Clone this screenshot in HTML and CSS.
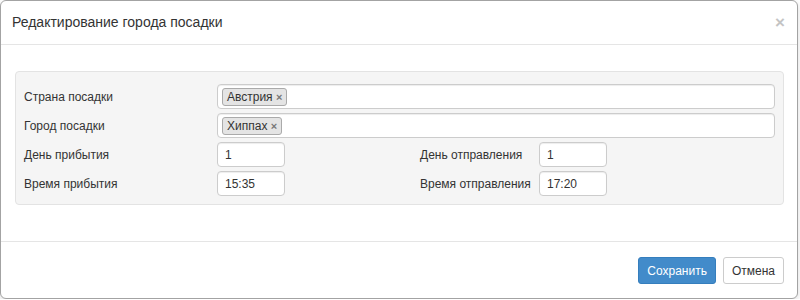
FILE: index.html
```
<!DOCTYPE html>
<html lang="ru">
<head>
	<meta charset="UTF-8">
	<title>Редактирование города посадки</title>
	<link rel="stylesheet" href="styles.css">
</head>
<body>
<div class="modal">
	<div class="modal-header">
		<span class="close">&times;</span>
		<h4 class="modal-title">Редактирование города посадки</h4>
	</div>
	<div class="modal-body">
		<div class="well">
			<div class="row">
				<label class="lbl">Страна посадки</label>
				<div class="tags"><span class="tag">Австрия <b>&times;</b></span></div>
			</div>
			<div class="row">
				<label class="lbl">Город посадки</label>
				<div class="tags"><span class="tag">Хиппах <b>&times;</b></span></div>
			</div>
			<div class="row">
				<label class="lbl">День прибытия</label>
				<input class="small" type="text" value="1">
				<label class="lbl lbl-right">День отправления</label>
				<input class="small" type="text" value="1">
			</div>
			<div class="row">
				<label class="lbl">Время прибытия</label>
				<input class="small" type="text" value="15:35">
				<label class="lbl lbl-right">Время отправления</label>
				<input class="small" type="text" value="17:20">
			</div>
		</div>
	</div>
	<div class="modal-footer">
		<button class="btn btn-primary">Сохранить</button>
		<button class="btn">Отмена</button>
	</div>
</div>
</body>
</html>
```
FILE: styles.css
```
html, body {
	margin: 0;
	font-family: "Liberation Sans", Arial, sans-serif;
	font-size: 12px;
	color: #333;
	background: #fff;
}
.modal {
	width: 796px;
	height: 297px;
	border: 1px solid #a3a3a3;
	border-radius: 6px;
	box-shadow: 0 2px 6px rgba(0,0,0,.15);
	display: flex;
	flex-direction: column;
	background: #fff;
}
.modal-header {
	height: 43px;
	padding: 0 12px 0 11px;
	border-bottom: 1px solid #e5e5e5;
	display: flex;
	align-items: center;
	flex-direction: row-reverse;
	justify-content: space-between;
}
.modal-title {
	margin: 0;
	font-size: 14px;
	font-weight: normal;
	color: #333;
	padding-bottom: 1px;
}
.close {
	font-size: 17px;
	font-weight: bold;
	color: #c4c4c4;
	line-height: 1;
}
.modal-body {
	flex: 1;
	padding: 26px 13px 0 14px;
}
.well {
	background: #f5f5f5;
	border: 1px solid #e3e3e3;
	border-radius: 4px;
	padding: 12px 8px 8px 8px;
	display: flex;
	flex-direction: column;
	gap: 4px;
}
.row {
	display: flex;
	align-items: center;
	height: 25px;
}
.lbl {
	width: 193px;
	flex: none;
	color: #333;
}
.lbl-right {
	width: 119px;
	margin-left: 135px;
}
.tags, input.small {
	box-sizing: border-box;
	height: 25px;
	border: 1px solid #ccc;
	border-radius: 4px;
	background: #fff;
	box-shadow: inset 0 1px 1px rgba(0,0,0,.075);
}
.tags {
	flex: 1;
	display: flex;
	align-items: center;
	padding-left: 4px;
}
.tag {
	background: #e4e4e4;
	border: 1px solid #aaa;
	border-radius: 3px;
	padding: 1px 4px;
	font-size: 12px;
	line-height: 14px;
	color: #333;
}
.tag b {
	color: #777;
	font-size: 11px;
}
input.small {
	width: 68px;
	padding: 0 7px;
	font-family: "Liberation Sans", Arial, sans-serif;
	font-size: 12px;
	color: #333;
	outline: none;
}
.modal-footer {
	box-sizing: border-box;
	height: 57px;
	border-top: 1px solid #e5e5e5;
	display: flex;
	align-items: flex-start;
	justify-content: flex-end;
	gap: 7px;
	padding: 15px 13px 0 0;
}
.btn {
	height: 27px;
	padding: 0 8px;
	font-family: "Liberation Sans", Arial, sans-serif;
	font-size: 12px;
	color: #333;
	background: #fff;
	border: 1px solid #ccc;
	border-radius: 3px;
}
.btn-primary {
	color: #fff;
	background: #428bca;
	border-color: #357ebd;
}
```
